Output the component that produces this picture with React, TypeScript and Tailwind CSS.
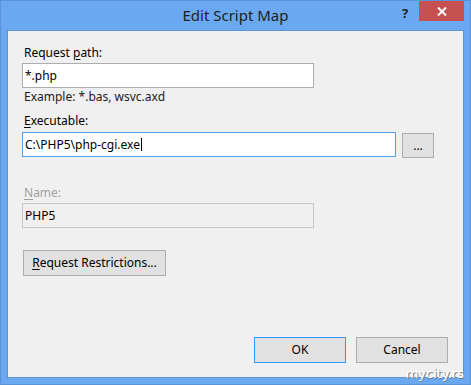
const UI = { fontFamily: '"Noto Sans", "Liberation Sans", Arial, sans-serif' };

function Btn({ children, primary, className = "" }: { children: React.ReactNode; primary?: boolean; className?: string }) {
  return (
    <div
      className={`flex items-center justify-center border bg-[#e1e1e1] text-[12px] text-black ${
        primary ? "border-[#3399ff]" : "border-[#adadad]"
      } ${className}`}
    >
      {children}
    </div>
  );
}

export default function App() {
  return (
    <div className="w-[471px] h-[385px] overflow-hidden" style={UI}>
      <div className="relative flex flex-col w-[471px] h-[385px] bg-[#6aa9f2] border border-[#5b93d6]">
        {/* Title bar */}
        <div className="relative h-[29px] flex items-center justify-center">
          <span className="text-[15px] text-[#1e1e1e] leading-none -mt-[1px]">Edit Script Map</span>
          <span className="absolute left-[401px] top-[3px] text-[13px] font-bold text-[#222]">?</span>
          <div className="absolute left-[418px] top-0 w-[45px] h-[20px] bg-[#c75050] flex items-center justify-center">
            <svg width="10" height="9" viewBox="0 0 10 9">
              <path d="M1 0.5 L9 8.5 M9 0.5 L1 8.5" stroke="#fff" strokeWidth="2" />
            </svg>
          </div>
        </div>

        {/* Client area */}
        <div className="mx-[6px] mb-[6px] flex-1 flex flex-col border border-[#5d94d2] bg-[#f0f0f0] px-[14px]">
          <div className="mt-[14px] h-[16px] text-[12px] leading-[16px] pl-[2px]">
            Request <span className="underline underline-offset-2">p</span>ath:
          </div>
          <div className="mt-[2px] w-[292px] h-[25px] border border-[#abadb3] bg-white flex items-center px-[2px] text-[12px]">
            *.php
          </div>
          <div className="mt-[1px] h-[16px] text-[12px] leading-[16px] pl-[2px] text-[#1a1a1a]">Example: *.bas, wsvc.axd</div>
          <div className="mt-[8px] h-[16px] text-[12px] leading-[16px] pl-[2px]">
            <span className="underline underline-offset-2">E</span>xecutable:
          </div>
          <div className="mt-[3px] flex items-start gap-[6px]">
            <div className="w-[374px] h-[25px] border border-[#569de5] bg-white flex items-center px-[2px] text-[12px]">
              C:\PHP5\php-cgi.exe
              <span className="inline-block w-px h-[13px] bg-black ml-[1px]" />
            </div>
            <Btn className="mt-[1px] w-[32px] h-[25px] border-[#adadad]">...</Btn>
          </div>
          <div className="mt-[27px] h-[16px] text-[12px] leading-[16px] pl-[2px] text-[#a0a0a0]">
            <span className="underline underline-offset-2">N</span>ame:
          </div>
          <div className="mt-[2px] w-[292px] h-[25px] border border-[#c8c8c8] bg-[#f0f0f0] flex items-center px-[2px] text-[12px]">
            PHP5
          </div>
          <Btn className="mt-[22px] ml-[1px] w-[143px] h-[26px]">
            <span>
              <span className="underline underline-offset-2">R</span>equest Restrictions...
            </span>
          </Btn>
          <div className="mt-auto mb-[14px] flex justify-end gap-[10px] pr-[1px]">
            <Btn primary className="w-[92px] h-[26px]">OK</Btn>
            <Btn className="w-[92px] h-[26px]">Cancel</Btn>
          </div>
        </div>

        <span
          className="absolute right-[6px] bottom-[4px] text-[13px] text-white leading-none [text-shadow:1px_1px_0_#7a7a7a]"
          style={{ fontFamily: '"DejaVu Sans", Verdana, sans-serif' }}
        >
          mycity.rs
        </span>
      </div>
    </div>
  );
}
